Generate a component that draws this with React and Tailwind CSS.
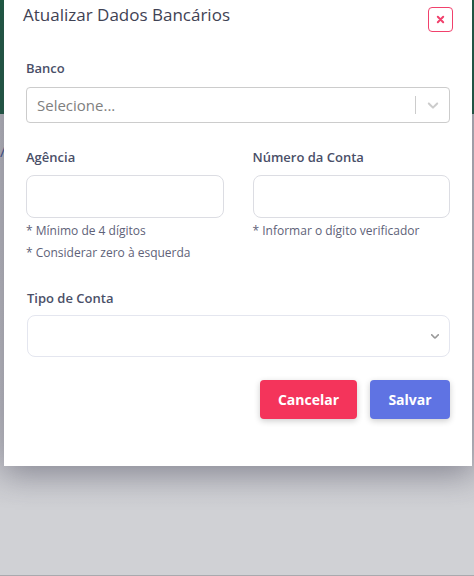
import React from 'react';

const ChevronDown = ({ className }) => (
  <svg viewBox="0 0 20 20" className={className} fill="currentColor">
    <path d="M4.516 7.548c.436-.446 1.043-.481 1.576 0L10 11.295l3.908-3.747c.533-.481 1.141-.446 1.574 0 .436.445.408 1.197 0 1.615-.406.418-4.695 4.502-4.695 4.502a1.095 1.095 0 0 1-1.576 0S4.924 9.581 4.516 9.163c-.409-.418-.436-1.17 0-1.615z" />
  </svg>
);

const Label = ({ children }) => (
  <label className="block text-[13px] font-semibold text-[#4a4f68] leading-none">{children}</label>
);

export default function App() {
  return (
    <div className="relative h-[576px] w-[474px] overflow-hidden bg-[#d0d1d5] font-['Open_Sans',sans-serif] border-b border-[#a9a9ae]">
      {/* page behind the overlay */}
      <div className="h-[114px] bg-[#1d5a42]" />
      <div className="h-[461px] bg-linear-to-b from-[#b9b9bf] from-0% via-[#bebec4] via-65% to-[#d0d1d5] to-85%">
        <span className="block pt-[30px] text-[15px] leading-none text-[#3b4f8f]">/</span>
      </div>

      {/* modal */}
      <div className="absolute left-[4px] top-0 w-[468px] h-[466px] bg-white shadow-[0_8px_30px_rgba(60,60,80,0.45)]">
        <div className="flex items-start justify-between pl-[19px] pr-[19px] pt-[3px]">
          <h2 className="text-[17px] font-medium text-[#3f4254] leading-[24px]">Atualizar Dados Bancários</h2>
          <button className="mt-[4px] w-[25px] h-[25px] rounded-[4px] border border-[#f1416c] flex items-center justify-center text-[#f1416c]">
            <svg viewBox="0 0 10 10" className="w-[9px] h-[9px]" stroke="currentColor" strokeWidth="2.2" strokeLinecap="round">
              <path d="M2 2l6 6M8 2l-6 6" />
            </svg>
          </button>
        </div>

        <div className="px-[22px] pt-[30px]">
          <Label>Banco</Label>
          <div className="flex items-center h-[36px] rounded-[4px] border border-[#cccccc] pl-[10px] mt-[12px]">
            <span className="flex-1 text-[15px] text-[#808080]">Selecione...</span>
            <span className="w-px h-[18px] bg-[#cccccc]" />
            <span className="w-[33px] flex justify-center text-[#cccccc]">
              <ChevronDown className="w-[18px] h-[18px]" />
            </span>
          </div>

          <div className="grid grid-cols-2 gap-[29px] mt-[28px]">
            <div>
              <Label>Agência</Label>
              <div className="h-[43px] rounded-[8px] border border-[#dcdde3] mt-[11px]" />
              <p className="mt-[5px] text-[12px] text-[#5e6278] leading-[16px]">* Mínimo de 4 dígitos</p>
              <p className="mt-[6px] text-[12px] text-[#5e6278] leading-[16px]">* Considerar zero à esquerda</p>
            </div>
            <div>
              <Label>Número da Conta</Label>
              <div className="h-[43px] rounded-[8px] border border-[#dcdde3] mt-[11px]" />
              <p className="mt-[5px] text-[12px] text-[#5e6278] leading-[16px]">* Informar o dígito verificador</p>
            </div>
          </div>

          <div className="mt-[31px] pl-[1px]">
            <Label>Tipo de Conta</Label>
            <div className="flex items-center justify-end h-[42px] rounded-[8px] border border-[#e4e6ef] mt-[10px] pr-[7px] text-[#999]">
              <ChevronDown className="w-[14px] h-[14px]" />
            </div>
          </div>

          <div className="flex justify-end gap-[13px] mt-[23px]">
            <button className="w-[97px] h-[39px] rounded-[4px] bg-[#f4345b] text-white text-[14px] font-bold shadow-[0_2px_6px_rgba(0,0,0,0.2)]">Cancelar</button>
            <button className="w-[80px] h-[39px] rounded-[4px] bg-[#5f73e3] text-white text-[14px] font-bold shadow-[0_2px_6px_rgba(0,0,0,0.2)]">Salvar</button>
          </div>
        </div>
      </div>
    </div>
  );
}
